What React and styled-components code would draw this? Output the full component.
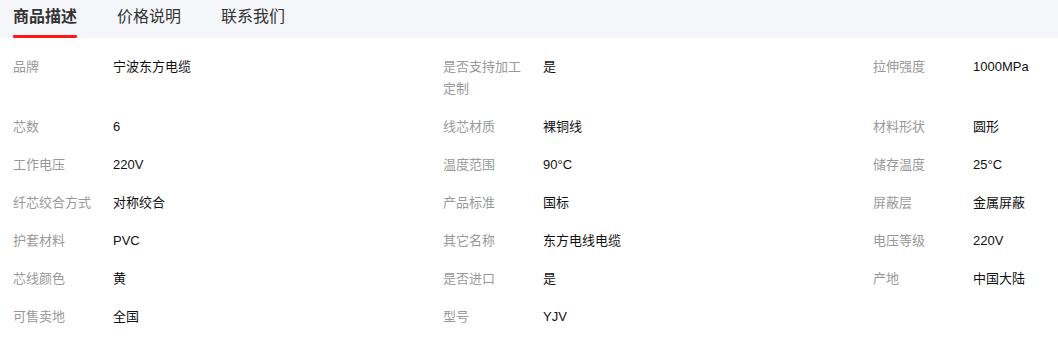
import { createGlobalStyle, styled } from 'styled-components'

const GlobalStyle = createGlobalStyle`
  body {
    margin: 0;
    background: #fff;
    font-family: "Liberation Sans", Arial, "Noto Sans CJK SC", sans-serif;
  }
`

const tabs = ['商品描述', '价格说明', '联系我们']

const specs = [
  ['品牌', '宁波东方电缆'],
  ['是否支持加工定制', '是'],
  ['拉伸强度', '1000MPa'],
  ['芯数', '6'],
  ['线芯材质', '裸铜线'],
  ['材料形状', '圆形'],
  ['工作电压', '220V'],
  ['温度范围', '90°C'],
  ['储存温度', '25°C'],
  ['纤芯绞合方式', '对称绞合'],
  ['产品标准', '国标'],
  ['屏蔽层', '金属屏蔽'],
  ['护套材料', 'PVC'],
  ['其它名称', '东方电线电缆'],
  ['电压等级', '220V'],
  ['芯线颜色', '黄'],
  ['是否进口', '是'],
  ['产地', '中国大陆'],
  ['可售卖地', '全国'],
  ['型号', 'YJV'],
]

const Wrapper = styled.div`
  width: 1058px;
  overflow: hidden;
`

const TabBar = styled.div`
  display: flex;
  gap: 40px;
  height: 38px;
  padding: 0 13px;
  background: #f5f6fa;
`

const Tab = styled.div`
  position: relative;
  display: flex;
  align-items: center;
  height: 100%;
  padding-bottom: 9px;
  box-sizing: border-box;
  font-size: 16px;
  color: #333;
  font-weight: ${({ $active }) => ($active ? 700 : 400)};

  &::after {
    content: '';
    display: ${({ $active }) => ($active ? 'block' : 'none')};
    position: absolute;
    left: 0;
    right: 0;
    bottom: 0;
    height: 3px;
    background: #ff1a1a;
    border-radius: 1px;
  }
`

const Grid = styled.div`
  display: grid;
  grid-template-columns: 430px 430px 1fr;
  padding: 10px 13px 0;
`

const Item = styled.div`
  display: flex;
  gap: 14px;
  padding: 8px 0;
  font-size: 13px;
  line-height: 22px;
`

const Label = styled.div`
  width: 86px;
  flex-shrink: 0;
  color: #999;
`

const Value = styled.div`
  color: #111;
`

export default function App() {
  return (
    <Wrapper>
      <GlobalStyle />
      <TabBar>
        {tabs.map((t, i) => (
          <Tab key={t} $active={i === 0}>
            {t}
          </Tab>
        ))}
      </TabBar>
      <Grid>
        {specs.map(([label, value]) => (
          <Item key={label}>
            <Label>{label}</Label>
            <Value>{value}</Value>
          </Item>
        ))}
      </Grid>
    </Wrapper>
  )
}
